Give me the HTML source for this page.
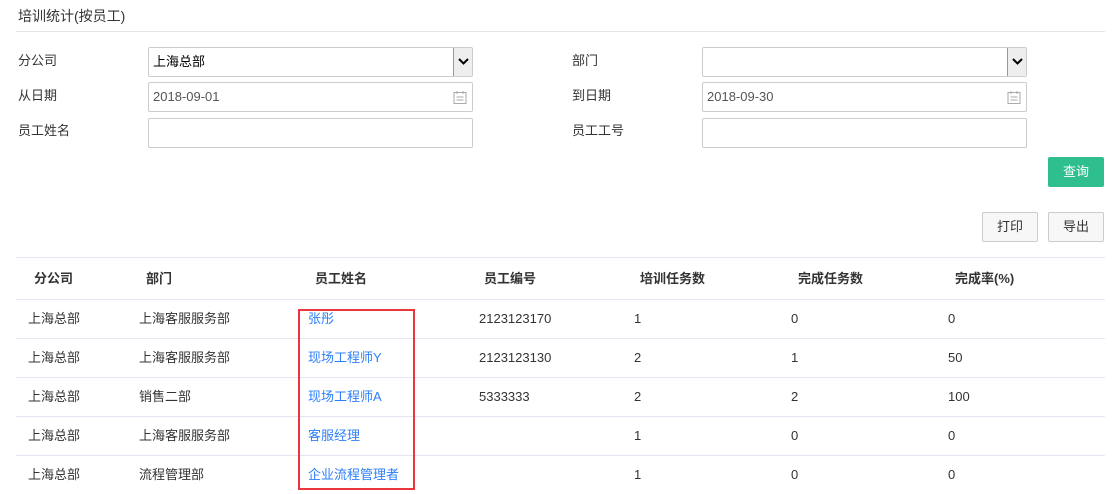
<!DOCTYPE html>
<html><head><meta charset="utf-8"><style>
*{box-sizing:border-box;margin:0;padding:0}
body{width:1119px;height:494px;overflow:hidden;background:#fff;font-family:"Liberation Sans","Noto Sans CJK SC",sans-serif;font-size:13px;color:#333;position:relative}
.a{position:absolute;line-height:16px}
.title{left:18px;top:8px;font-size:14px;color:#333}
.hr{left:16px;top:31px;width:1089px;height:1px;background:#e5e5e5}
.lbl{font-size:13px;color:#333}
.a.inp{border:1px solid #ccc;border-radius:2px;height:30px;background:#fff;padding-left:4px;line-height:28px;font-size:13px}
.sel .arr{position:absolute;right:0;top:0;width:19px;height:28px;background:#eee;border-left:1px solid #999}
.a.btn{border:1px solid #ccc;border-radius:2px;background:#f7f7f7;text-align:center;line-height:28px;width:57px;height:30px;color:#333}
.line{left:16px;width:1089px;height:1px;background:#e6e6f0}
.th{font-weight:bold;top:271px}
.link{color:#2d7ff9}
</style></head><body>
<div class="a title">培训统计(按员工)</div>
<div class="a hr"></div>

<div class="a lbl" style="left:18px;top:53px">分公司</div>
<div class="a inp sel" style="left:148px;top:47px;width:325px;color:#000">上海总部<div class="arr"><svg width="19" height="28"><path d="M5 11l4.5 4.5L14 11" stroke="#000" stroke-width="2" fill="none"/></svg></div></div>
<div class="a lbl" style="left:572px;top:53px">部门</div>
<div class="a inp sel" style="left:702px;top:47px;width:325px"><div class="arr"><svg width="19" height="28"><path d="M5 11l4.5 4.5L14 11" stroke="#000" stroke-width="2" fill="none"/></svg></div></div>

<div class="a lbl" style="left:18px;top:88px">从日期</div>
<div class="a inp" style="left:148px;top:82px;width:325px;color:#555">2018-09-01<svg class="a" style="right:5px;top:7px" width="14" height="14"><rect x="1" y="2.5" width="12" height="11" fill="none" stroke="#aaa"/><path d="M4 1v3M10 1v3M3.5 7h7M3.5 10h7" stroke="#aaa"/></svg></div>
<div class="a lbl" style="left:572px;top:88px">到日期</div>
<div class="a inp" style="left:702px;top:82px;width:325px;color:#555">2018-09-30<svg class="a" style="right:5px;top:7px" width="14" height="14"><rect x="1" y="2.5" width="12" height="11" fill="none" stroke="#aaa"/><path d="M4 1v3M10 1v3M3.5 7h7M3.5 10h7" stroke="#aaa"/></svg></div>

<div class="a lbl" style="left:18px;top:123px">员工姓名</div>
<div class="a inp" style="left:148px;top:118px;width:325px"></div>
<div class="a lbl" style="left:572px;top:123px">员工工号</div>
<div class="a inp" style="left:702px;top:118px;width:325px"></div>

<div class="a btn" style="left:1048px;top:157px;width:56px;background:#2fbf8f;border-color:#2fbf8f;color:#fff">查询</div>
<div class="a btn" style="left:982px;top:212px;width:56px">打印</div>
<div class="a btn" style="left:1048px;top:212px;width:56px">导出</div>

<div class="a line" style="top:257px"></div>
<div class="a th" style="left:34px">分公司</div>
<div class="a th" style="left:146px">部门</div>
<div class="a th" style="left:315px">员工姓名</div>
<div class="a th" style="left:484px">员工编号</div>
<div class="a th" style="left:640px">培训任务数</div>
<div class="a th" style="left:798px">完成任务数</div>
<div class="a th" style="left:955px">完成率(%)</div>

<div class="a line" style="top:299px"></div>
<div class="a line" style="top:338px"></div>
<div class="a line" style="top:377px"></div>
<div class="a line" style="top:416px"></div>
<div class="a line" style="top:455px"></div>

<div class="a" style="left:28px;top:311px">上海总部</div><div class="a" style="left:139px;top:311px">上海客服服务部</div><div class="a link" style="left:308px;top:311px">张彤</div><div class="a" style="left:479px;top:311px">2123123170</div><div class="a" style="left:634px;top:311px">1</div><div class="a" style="left:791px;top:311px">0</div><div class="a" style="left:948px;top:311px">0</div>

<div class="a" style="left:28px;top:350px">上海总部</div><div class="a" style="left:139px;top:350px">上海客服服务部</div><div class="a link" style="left:308px;top:350px">现场工程师Y</div><div class="a" style="left:479px;top:350px">2123123130</div><div class="a" style="left:634px;top:350px">2</div><div class="a" style="left:791px;top:350px">1</div><div class="a" style="left:948px;top:350px">50</div>

<div class="a" style="left:28px;top:389px">上海总部</div><div class="a" style="left:139px;top:389px">销售二部</div><div class="a link" style="left:308px;top:389px">现场工程师A</div><div class="a" style="left:479px;top:389px">5333333</div><div class="a" style="left:634px;top:389px">2</div><div class="a" style="left:791px;top:389px">2</div><div class="a" style="left:948px;top:389px">100</div>

<div class="a" style="left:28px;top:428px">上海总部</div><div class="a" style="left:139px;top:428px">上海客服服务部</div><div class="a link" style="left:308px;top:428px">客服经理</div><div class="a" style="left:634px;top:428px">1</div><div class="a" style="left:791px;top:428px">0</div><div class="a" style="left:948px;top:428px">0</div>

<div class="a" style="left:28px;top:467px">上海总部</div><div class="a" style="left:139px;top:467px">流程管理部</div><div class="a link" style="left:308px;top:467px">企业流程管理者</div><div class="a" style="left:634px;top:467px">1</div><div class="a" style="left:791px;top:467px">0</div><div class="a" style="left:948px;top:467px">0</div>

<div class="a" style="left:298px;top:309px;width:117px;height:181px;border:2px solid #e8383d"></div>
</body></html>
